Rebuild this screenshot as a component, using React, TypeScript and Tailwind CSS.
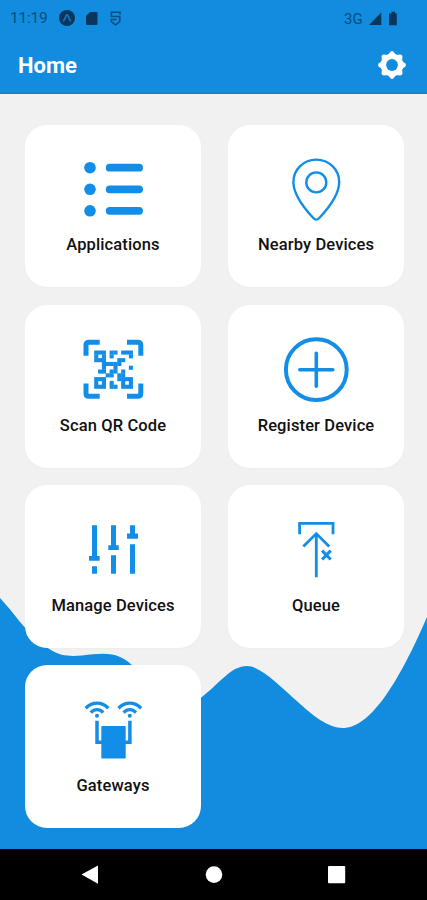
import type { ReactNode } from "react";

const BLUE = "#128ee8";

interface Tile {
  label: string;
  icon: ReactNode;
}

// 10x10 module pattern, one string per row
const QR_ROWS = [
  "###.##.###",
  "#.#.#....#",
  "###...##..",
  "..#####...",
  "..#..#...#",
  ".##.##.#..",
  "...##.##..",
  "###...####",
  "#.#.#..#.#",
  "###.##.###",
];

function ListIcon() {
  return (
    <>
      {[17.7, 39.3, 60.8].map((y) => (
        <g key={y}>
          <circle cx="22" cy={y} r="5.8" />
          <rect x="37.8" y={y - 3.9} width="37.2" height="7.8" rx="3.9" />
        </g>
      ))}
    </>
  );
}

function PinIcon() {
  return (
    <g fill="none" stroke={BLUE} strokeWidth="2.4">
      <path d="M45.3 9.6C32.6 9.6 22.4 19.5 22.4 32C22.4 43 31.5 56.5 42.3 68Q45.3 71.2 48.3 68C59.1 56.5 68.2 43 68.2 32C68.2 19.5 58 9.6 45.3 9.6Z" />
      <circle cx="45.3" cy="32.4" r="10" />
    </g>
  );
}

function QrIcon() {
  return (
    <>
      <path
        fill="none"
        stroke={BLUE}
        strokeWidth="5"
        d="M18 25.7V15.2Q18 12.2 21 12.2H31.7M59 12.2H69.8Q72.8 12.2 72.8 15.2V25.7M72.8 53.5V63.2Q72.8 66.2 69.8 66.2H59M31.7 66.2H21Q18 66.2 18 63.2V53.5"
      />
      {QR_ROWS.map((row, y) =>
        row.split("").map((cell, x) =>
          cell === "#" ? (
            <rect key={`${x}-${y}`} x={26.2 + x * 3.85} y={20.5 + y * 3.8} width="4.1" height="4.1" />
          ) : null
        )
      )}
    </>
  );
}

function PlusIcon() {
  return (
    <g fill="none" stroke={BLUE} strokeWidth="4" strokeLinecap="round">
      <circle cx="45.3" cy="39.7" r="30.4" />
      <path d="M45.3 23.2V56.2M28.8 39.7H61.8" strokeWidth="3.6" />
    </g>
  );
}

function SlidersIcon() {
  return (
    <path d="M24 15.3h5V46h2.7v4.8H21V46h3zM24 56.3h5v7.5h-5zM43 15.3h5v20h2.7v4.6H40.3v-4.6H43zM43 45.3h5v18.5h-5zM62 15.3h5v8.2h3v5.3H59v-5.3h3zM62 34.3h5v29.5h-5z" />
  );
}

function QueueIcon() {
  return (
    <g fill="none" stroke={BLUE} strokeWidth="2.8">
      <path d="M28.6 24.2V13.4H62V24.2" />
      <path d="M45.3 23.5V67.3M32.3 36.4L45.3 23.6L58.2 36.4" />
      <path d="M51.1 40.7L59.7 49.5M59.7 40.7L51.1 49.5" strokeWidth="3.1" />
    </g>
  );
}

function GatewayIcon() {
  return (
    <>
      <rect x="33.3" y="36" width="24.4" height="32.6" rx="0.8" />
      <path fill="none" stroke={BLUE} strokeWidth="3.5" d="M29 30.7V52.2H34M61.9 30.7V52.2H57" />
      {[29, 61.8].map((x) => (
        <g key={x}>
          <circle cx={x} cy="25.8" r="2" />
          <g transform={`translate(${x} 0)`} fill="none" stroke={BLUE} strokeWidth="3.3">
            <path d="M-11.3 18.2Q-6.2 13.2 0 13.2T11.3 18.2" />
            <path d="M-6.2 22.6Q-3.4 19.7 0 19.7T6.2 22.6" />
          </g>
        </g>
      ))}
    </>
  );
}

const tiles: Tile[] = [
  { label: "Applications", icon: <ListIcon /> },
  { label: "Nearby Devices", icon: <PinIcon /> },
  { label: "Scan QR Code", icon: <QrIcon /> },
  { label: "Register Device", icon: <PlusIcon /> },
  { label: "Manage Devices", icon: <SlidersIcon /> },
  { label: "Queue", icon: <QueueIcon /> },
  { label: "Gateways", icon: <GatewayIcon /> },
];

function StatusBar() {
  return (
    <div className="flex h-[37px] items-center justify-between pt-px pr-[29px] pl-[10px] text-[15.5px] text-[#0b4c80]">
      <div className="flex items-center">
        <span className="w-[49px] tracking-[-0.2px]">11:19</span>
        <svg width="64" height="18" viewBox="0 0 64 18" fill="#08365c">
          <circle cx="8" cy="8" r="8" />
          <path d="M4.2 11.4Q6.4 8.4 7 5.8Q8 4 9 5.8Q9.6 8.4 11.8 11.4" fill="none" stroke="#1a76bd" strokeWidth="1.6" />
          <path d="M31 2h6.2q1.3 0 1.3 1.3v10.4q0 1.3-1.3 1.3h-8.9q-1.3 0-1.3-1.3V6z" />
          <path
            d="M61 4.6V2.3H52.4V6.6H60.8V11.4L56.5 15L52.2 11.4V9.6H57.5"
            fill="none"
            stroke="#0b4c80"
            strokeWidth="1.5"
          />
        </svg>
      </div>
      <div className="flex items-center">
        <span className="w-[25px] text-[15px]">3G</span>
        <svg width="29" height="16" viewBox="0 0 29 16" fill="#08365c">
          <path d="M12.3 1.5V14H0Z" />
          <path d="M22.5 0.8h3.6v1.7h1.7V14.2h-7.8V2.5h2.5z" />
        </svg>
      </div>
    </div>
  );
}

function TileCard({ label, icon }: Tile) {
  return (
    <button className="flex h-[162.4px] flex-col items-center rounded-[22px] bg-white pt-[25px] shadow-[0_1px_3px_rgba(0,0,0,0.02)]">
      <svg width="90" height="80" viewBox="0 0 90 80" fill={BLUE}>
        {icon}
      </svg>
      <span className="mt-[5.4px] text-[16.5px] leading-5 font-medium tracking-[0.12px] whitespace-nowrap text-[#111]">
        {label}
      </span>
    </button>
  );
}

export default function App() {
  return (
    <div className="flex h-[900px] w-[427px] flex-col overflow-hidden bg-[#f1f1f1] font-[Roboto,sans-serif]">
      <header className="h-[94px] shrink-0 border-b border-[#0d7fce] bg-[#128cde]">
        <StatusBar />
        <div className="flex h-[55px] items-center justify-between pr-[20px] pl-[18px]">
          <h1 className="pt-px text-[22px] font-bold text-white">Home</h1>
          <svg width="30" height="30" viewBox="-15 -15 30 30">
            <g fill="#fff">
              <circle r="11.3" />
              {[0, 45, 90, 135, 180, 225, 270, 315].map((a) => (
                <path key={a} d="M-4.6 -9.5L-1.5 -13.3Q0 -14.7 1.5 -13.3L4.6 -9.5Z" transform={`rotate(${a})`} />
              ))}
            </g>
            <circle r="5.9" fill="#128cde" />
          </svg>
        </div>
      </header>

      <main className="relative flex-1">
        {/* Wave behind the tiles */}
        <svg className="absolute inset-0" width="427" height="755" viewBox="0 94 427 755">
          <path
            fill="#128cde"
            d="M0 598C14 613 24 629 38 641C44 646 48 648 51 650C60 656 70 656.5 82 655.5C94 654 104 653 112 654.5C122 656.5 128 661 133 666C146 682 160 710 180 710C190 710 195 703 203 696C220 683 231 666 247 666C261 666 281 687 298 702C312 715 328 728 343 728C366 728 393 696 427 617V849H0Z"
          />
        </svg>
        <div className="relative grid grid-cols-[176px_176px] gap-x-[27px] gap-y-[17.75px] pt-[31px] pl-[25px]">
          {tiles.map((tile) => (
            <TileCard key={tile.label} {...tile} />
          ))}
        </div>
      </main>

      <nav className="h-[51px] shrink-0 bg-black">
        <svg width="427" height="51" viewBox="0 0 427 51" fill="#fff">
          <path d="M81.5 25.5L98 16.5V34.8Z" />
          <circle cx="214" cy="25.6" r="8.3" />
          <rect x="328" y="17" width="17.2" height="17.2" rx="1" />
        </svg>
      </nav>
    </div>
  );
}
